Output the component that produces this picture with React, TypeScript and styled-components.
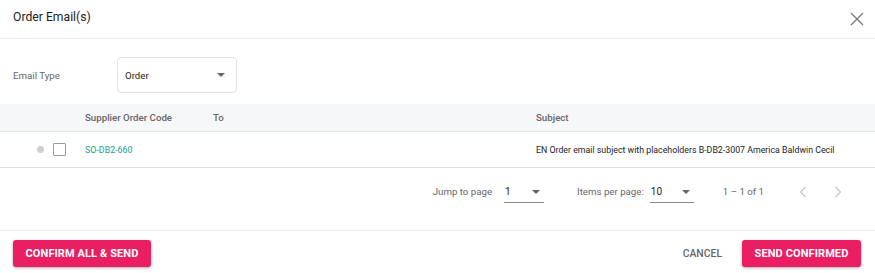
import React from "react";
import styled, { createGlobalStyle } from "styled-components";

const Global = createGlobalStyle`
  html, body { margin: 0; padding: 0; background: #fff; }
  body { font-family: Roboto, "Liberation Sans", Arial, sans-serif; color: #333; }
  * { box-sizing: border-box; }
`;

const Dialog = styled.div`
  width: 875px;
  height: 273px;
  display: flex;
  flex-direction: column;
  background: #fff;
`;

const Header = styled.div`
  height: 39px;
  display: flex;
  align-items: center;
  justify-content: space-between;
  padding: 0 11px 1px 13px;
  border-bottom: 1px solid #ececec;
`;

const Title = styled.div`
  font-size: 12.2px;
  color: #222;
  margin-bottom: 4px;
`;

const CloseButton = styled.button`
  border: 0;
  background: none;
  padding: 0;
  width: 14px;
  height: 14px;
  display: flex;
  cursor: pointer;
`;

const FormRow = styled.div`
  display: flex;
  align-items: center;
  padding: 18px 13px 0;
`;

const Label = styled.div`
  width: 104px;
  font-size: 9.7px;
  color: #666;
`;

const SelectBox = styled.div`
  width: 120px;
  height: 36px;
  border: 1px solid #e2e2e2;
  border-radius: 4px;
  display: flex;
  align-items: center;
  justify-content: space-between;
  padding: 0 11px 0 7px;
  font-size: 9.7px;
  color: #222;
`;

const Caret = styled.span<{ $color?: string }>`
  width: 0;
  height: 0;
  border-left: 4px solid transparent;
  border-right: 4px solid transparent;
  border-top: 4px solid ${(p) => p.$color || "#666"};
`;

const Table = styled.div`
  margin-top: 11px;
  display: flex;
  flex-direction: column;
`;

const Row = styled.div<{ $head?: boolean }>`
  display: grid;
  grid-template-columns: 85px 128px 323px 1fr;
  align-items: center;
  height: ${(p) => (p.$head ? "28px" : "36px")};
  background: ${(p) => (p.$head ? "#f6f7f9" : "#fff")};
  border-bottom: 1px solid #dce2e8;
  font-size: ${(p) => (p.$head ? "9.7px" : "8.8px")};
  font-weight: ${(p) => (p.$head ? 500 : 400)};
  color: ${(p) => (p.$head ? "#666" : "#222")};
`;

const SelectCell = styled.div`
  display: flex;
  align-items: center;
  justify-content: flex-end;
  gap: 9px;
  padding-right: 19px;
`;

const StatusDot = styled.span`
  width: 7px;
  height: 7px;
  border-radius: 50%;
  background: #cfcfcf;
`;

const Checkbox = styled.span`
  width: 13px;
  height: 13px;
  border: 1px solid #9a9a9a;
  border-radius: 1px;
  background: #fff;
`;

const CodeLink = styled.a`
  color: #17a08f;
  text-decoration: none;
  font-size: 8.9px;
`;

const Pagination = styled.div`
  display: flex;
  align-items: center;
  justify-content: flex-end;
  height: 47px;
  padding-right: 33px;
  font-size: 9.7px;
  color: #666;
`;

const PageLabel = styled.span<{ $gap: number }>`
  margin-right: ${(p) => p.$gap}px;
`;

const PageSelect = styled.div<{ $w: number; $after: number }>`
  width: ${(p) => p.$w}px;
  height: 20px;
  margin-right: ${(p) => p.$after}px;
  margin-top: 3px;
  border-bottom: 1px solid #888;
  display: flex;
  align-items: center;
  justify-content: space-between;
  padding: 0 4px 2px 1px;
  color: #222;
  font-size: 10px;
`;

const RangeText = styled.span`
  margin-right: 35px;
`;

const NavButton = styled.button`
  border: 0;
  background: none;
  padding: 0;
  width: 8px;
  height: 12px;
  display: flex;
`;

const NavGroup = styled.div`
  display: flex;
  gap: 27px;
`;

const Footer = styled.div`
  margin-top: auto;
  border-top: 1px solid #ececec;
  height: 43px;
  display: flex;
  align-items: flex-start;
  justify-content: space-between;
  padding: 9px 14px 0 13px;
`;

const PrimaryButton = styled.button<{ $w: number }>`
  width: ${(p) => p.$w}px;
  height: 27px;
  border: 0;
  border-radius: 3px;
  background: #e91e63;
  color: #fff;
  font-family: Roboto, "Liberation Sans", Arial, sans-serif;
  font-size: 11px;
  font-weight: 700;
  text-transform: uppercase;
  letter-spacing: 0.1px;
  box-shadow: 0 1px 3px rgba(0, 0, 0, 0.35);
  cursor: pointer;
`;

const TextButton = styled.button`
  border: 0;
  background: none;
  color: #666;
  font-family: Roboto, "Liberation Sans", Arial, sans-serif;
  font-size: 10.4px;
  font-weight: 500;
  text-transform: uppercase;
  height: 27px;
  padding: 0;
  margin-right: 20px;
  cursor: pointer;
`;

const RightActions = styled.div`
  display: flex;
  align-items: center;
`;

export default function App() {
  return (
    <>
      <Global />
      <Dialog>
        <Header>
          <Title>Order Email(s)</Title>
          <CloseButton aria-label="close">
            <svg width="14" height="14" viewBox="0 0 14 14">
              <path d="M1 1L13 13M13 1L1 13" stroke="#777" strokeWidth="1.3" />
            </svg>
          </CloseButton>
        </Header>
        <FormRow>
          <Label>Email Type</Label>
          <SelectBox>
            <span>Order</span>
            <Caret />
          </SelectBox>
        </FormRow>
        <Table>
          <Row $head>
            <span />
            <span>Supplier Order Code</span>
            <span>To</span>
            <span>Subject</span>
          </Row>
          <Row>
            <SelectCell>
              <StatusDot />
              <Checkbox />
            </SelectCell>
            <CodeLink href="#">SO-DB2-660</CodeLink>
            <span />
            <span>EN Order email subject with placeholders B-DB2-3007 America Baldwin Cecil</span>
          </Row>
        </Table>
        <Pagination>
          <PageLabel $gap={12}>Jump to page</PageLabel>
          <PageSelect $w={40} $after={33}>
            <span>1</span>
            <Caret />
          </PageSelect>
          <PageLabel $gap={6}>Items per page:</PageLabel>
          <PageSelect $w={44} $after={29}>
            <span>10</span>
            <Caret />
          </PageSelect>
          <RangeText>1 – 1 of 1</RangeText>
          <NavGroup>
            <NavButton aria-label="previous">
              <svg width="8" height="12" viewBox="0 0 8 12">
                <path d="M6.5 1L1.5 6L6.5 11" fill="none" stroke="#c4c4c4" strokeWidth="1.2" />
              </svg>
            </NavButton>
            <NavButton aria-label="next">
              <svg width="8" height="12" viewBox="0 0 8 12">
                <path d="M1.5 1L6.5 6L1.5 11" fill="none" stroke="#c4c4c4" strokeWidth="1.2" />
              </svg>
            </NavButton>
          </NavGroup>
        </Pagination>
        <Footer>
          <PrimaryButton $w={138}>Confirm All &amp; Send</PrimaryButton>
          <RightActions>
            <TextButton>Cancel</TextButton>
            <PrimaryButton $w={119}>Send Confirmed</PrimaryButton>
          </RightActions>
        </Footer>
      </Dialog>
    </>
  );
}
